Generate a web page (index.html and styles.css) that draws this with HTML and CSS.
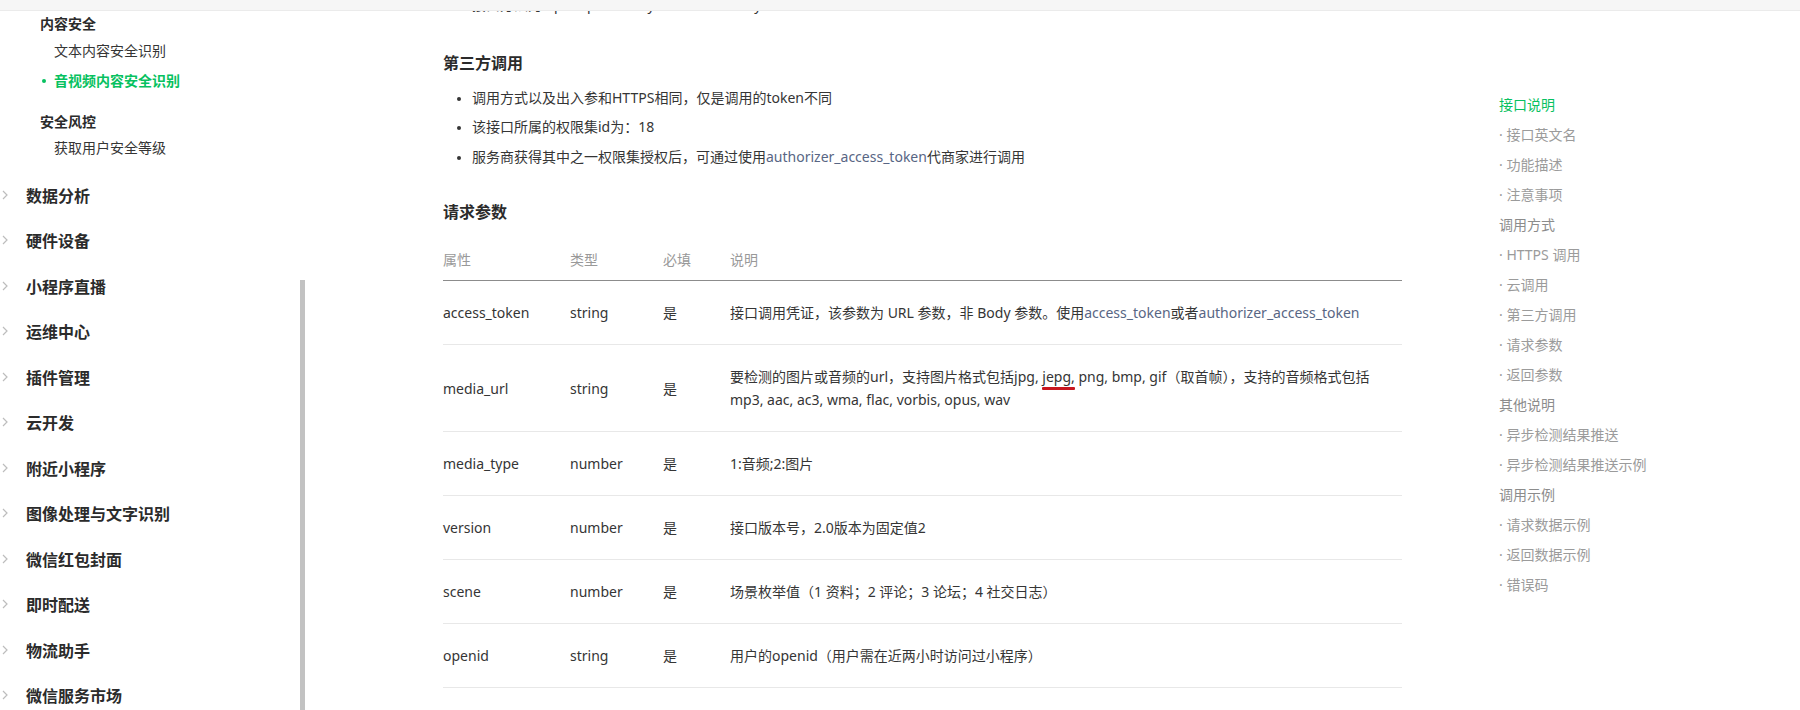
FILE: index.html
```html
<!doctype html>
<html lang="zh-CN">
  <head>
    <meta charset="UTF-8" />
    <title>音视频内容安全识别</title>
    <link rel="stylesheet" href="styles.css">
  </head>
  <body>
    <div class="topbar"></div>

    <div class="page">
      <aside class="sidebar">
        <div class="sub-group">
          <div class="sub-title">内容安全</div>
          <div class="sub-item">文本内容安全识别</div>
          <div class="sub-item active">音视频内容安全识别</div>
        </div>
        <div class="sub-group">
          <div class="sub-title">安全风控</div>
          <div class="sub-item">获取用户安全等级</div>
        </div>

        <ul class="groups">
          <li><svg class="chev" viewBox="0 0 6 10"><polyline points="1,1 5,5 1,9" /></svg>数据分析</li>
          <li><svg class="chev" viewBox="0 0 6 10"><polyline points="1,1 5,5 1,9" /></svg>硬件设备</li>
          <li><svg class="chev" viewBox="0 0 6 10"><polyline points="1,1 5,5 1,9" /></svg>小程序直播</li>
          <li><svg class="chev" viewBox="0 0 6 10"><polyline points="1,1 5,5 1,9" /></svg>运维中心</li>
          <li><svg class="chev" viewBox="0 0 6 10"><polyline points="1,1 5,5 1,9" /></svg>插件管理</li>
          <li><svg class="chev" viewBox="0 0 6 10"><polyline points="1,1 5,5 1,9" /></svg>云开发</li>
          <li><svg class="chev" viewBox="0 0 6 10"><polyline points="1,1 5,5 1,9" /></svg>附近小程序</li>
          <li><svg class="chev" viewBox="0 0 6 10"><polyline points="1,1 5,5 1,9" /></svg>图像处理与文字识别</li>
          <li><svg class="chev" viewBox="0 0 6 10"><polyline points="1,1 5,5 1,9" /></svg>微信红包封面</li>
          <li><svg class="chev" viewBox="0 0 6 10"><polyline points="1,1 5,5 1,9" /></svg>即时配送</li>
          <li><svg class="chev" viewBox="0 0 6 10"><polyline points="1,1 5,5 1,9" /></svg>物流助手</li>
          <li><svg class="chev" viewBox="0 0 6 10"><polyline points="1,1 5,5 1,9" /></svg>微信服务市场</li>
        </ul>

        <div class="scroll-thumb"></div>
      </aside>

      <main class="doc">
        <ul class="bullets first">
          <li>接口方法为 openapi.security.mediaCheckAsync</li>
        </ul>

        <h3>第三方调用</h3>
        <ul class="bullets">
          <li>调用方式以及出入参和HTTPS相同，仅是调用的token不同</li>
          <li>该接口所属的权限集id为：18</li>
          <li>服务商获得其中之一权限集授权后，可通过使用<a>authorizer_access_token</a>代商家进行调用</li>
        </ul>

        <h3 class="params-title">请求参数</h3>
        <table class="params">
          <thead>
            <tr>
              <th class="c-name">属性</th>
              <th class="c-type">类型</th>
              <th class="c-req">必填</th>
              <th>说明</th>
            </tr>
          </thead>
          <tbody>
            <tr>
              <td>access_token</td>
              <td>string</td>
              <td>是</td>
              <td class="desc">接口调用凭证，该参数为 URL 参数，非 Body 参数。使用<a>access_token</a>或者<a>authorizer_access_token</a></td>
            </tr>
            <tr>
              <td>media_url</td>
              <td>string</td>
              <td>是</td>
              <td class="desc">要检测的图片或音频的url，支持图片格式包括jpg, <span class="mark">jepg,</span> png, bmp, gif（取首帧），支持的音频格式包括<br>mp3, aac, ac3, wma, flac, vorbis, opus, wav</td>
            </tr>
            <tr>
              <td>media_type</td>
              <td>number</td>
              <td>是</td>
              <td class="desc">1:音频;2:图片</td>
            </tr>
            <tr>
              <td>version</td>
              <td>number</td>
              <td>是</td>
              <td class="desc">接口版本号，2.0版本为固定值2</td>
            </tr>
            <tr>
              <td>scene</td>
              <td>number</td>
              <td>是</td>
              <td class="desc">场景枚举值（1 资料；2 评论；3 论坛；4 社交日志）</td>
            </tr>
            <tr>
              <td>openid</td>
              <td>string</td>
              <td>是</td>
              <td class="desc">用户的openid（用户需在近两小时访问过小程序）</td>
            </tr>
          </tbody>
        </table>
      </main>

      <nav class="toc">
        <div class="toc-item current">接口说明</div>
        <div class="toc-item sub">· 接口英文名</div>
        <div class="toc-item sub">· 功能描述</div>
        <div class="toc-item sub">· 注意事项</div>
        <div class="toc-item">调用方式</div>
        <div class="toc-item sub">· HTTPS 调用</div>
        <div class="toc-item sub">· 云调用</div>
        <div class="toc-item sub">· 第三方调用</div>
        <div class="toc-item sub">· 请求参数</div>
        <div class="toc-item sub">· 返回参数</div>
        <div class="toc-item">其他说明</div>
        <div class="toc-item sub">· 异步检测结果推送</div>
        <div class="toc-item sub">· 异步检测结果推送示例</div>
        <div class="toc-item">调用示例</div>
        <div class="toc-item sub">· 请求数据示例</div>
        <div class="toc-item sub">· 返回数据示例</div>
        <div class="toc-item sub">· 错误码</div>
      </nav>
    </div>
  </body>
</html>
```

FILE: styles.css
```css
html,
body {
  margin: 0;
  height: 100%;
  overflow: hidden;
}

body {
  font-family: "Noto Sans", "Noto Sans CJK SC", sans-serif;
  font-size: 14px;
  color: #353535;
  background: #fff;
}

.topbar {
  position: fixed;
  top: 0;
  left: 0;
  right: 0;
  height: 10px;
  background: #f6f6f6;
  border-bottom: 1px solid #ebebeb;
  z-index: 10;
}

.page {
  display: flex;
  align-items: flex-start;
}

/* left navigation */
.sidebar {
  position: relative;
  width: 306px;
  height: 710px;
  flex-shrink: 0;
  padding-top: 12px;
  box-sizing: border-box;
}

.sub-group {
  margin-bottom: 14px;
}

.sub-group + .sub-group {
  margin-bottom: 10px;
}

.sub-title {
  padding-left: 40px;
  line-height: 24px;
  font-weight: 700;
  color: #2b2b2b;
}

.sub-item {
  position: relative;
  padding-left: 54px;
  line-height: 30px;
  color: #353535;
}

.sub-group + .sub-group .sub-item {
  line-height: 28px;
}

.sub-item.active {
  color: #07c160;
  font-weight: 700;
}

.sub-item.active::before {
  content: "";
  position: absolute;
  left: 42px;
  top: 13px;
  width: 4px;
  height: 4px;
  border-radius: 50%;
  background: #07c160;
}

.groups {
  list-style: none;
  margin: 0;
  padding: 0;
}

.groups li {
  display: flex;
  align-items: center;
  height: 45.5px;
  font-size: 16px;
  font-weight: 700;
  color: #2b2b2b;
}

.chev {
  width: 6px;
  height: 10px;
  margin-left: 2px;
  margin-right: 18px;
  fill: none;
  stroke: #bdbdbd;
  stroke-width: 1.2;
}

.scroll-thumb {
  position: absolute;
  left: 300px;
  top: 280px;
  width: 5px;
  height: 440px;
  background: #c2c2c2;
}

/* main document */
.doc {
  width: 959px;
  margin-left: 137px;
  flex-shrink: 0;
}

.doc h3 {
  margin: 31px 0 0;
  font-size: 16px;
  line-height: 24px;
  font-weight: 700;
  color: #2b2b2b;
}

.doc h3.params-title {
  margin-top: 29px;
}

.bullets {
  margin: 8px 0 0;
  padding-left: 29px;
}

.bullets.first {
  margin-top: -10px;
}

.bullets li {
  line-height: 29.5px;
}

.bullets li::marker {
  font-size: 12px;
}

a {
  color: #586684;
  text-decoration: none;
}

.params {
  width: 959px;
  margin-top: 13px;
  border-collapse: collapse;
}

.params th {
  padding: 11px 0 9px;
  text-align: left;
  font-weight: 400;
  line-height: 23px;
  color: #999;
  border-bottom: 1px solid #8c8c8c;
}

.params .c-name {
  width: 127px;
}

.params .c-type {
  width: 93px;
}

.params .c-req {
  width: 67px;
}

.params td {
  padding: 20px 0;
  line-height: 23px;
  vertical-align: middle;
  border-bottom: 1px solid #e8e8e8;
}

.params td.desc {
  white-space: nowrap;
}

.mark {
  position: relative;
}

.mark::after {
  content: "";
  position: absolute;
  left: 0;
  right: 0;
  bottom: -4px;
  height: 3px;
  background: #c8161e;
  border-radius: 1px;
}

/* right table of contents */
.toc {
  margin-left: 97px;
  padding-top: 90px;
}

.toc-item {
  line-height: 30px;
  color: #8c8c8c;
  white-space: nowrap;
}

.toc-item.sub {
  color: #9b9b9b;
}

.toc-item.current {
  color: #07c160;
}
```
